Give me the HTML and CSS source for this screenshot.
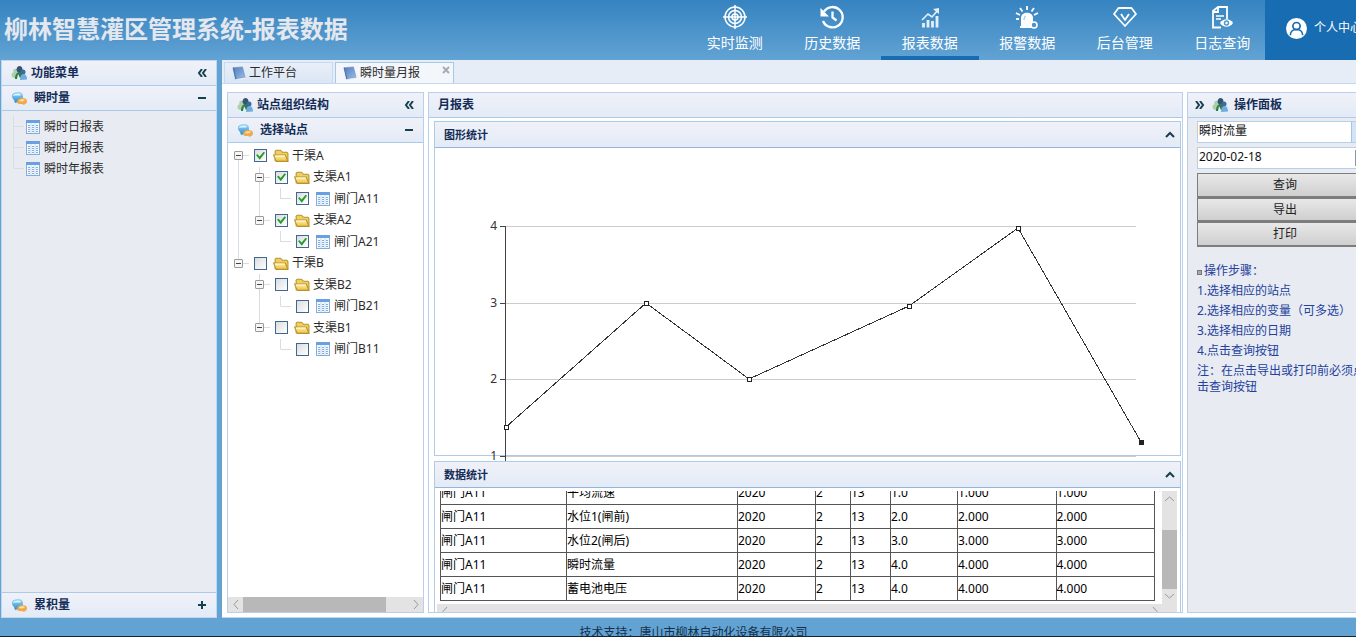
FILE: index.html
```html
<!DOCTYPE html>
<html lang="zh-CN">
<head>
<meta charset="utf-8">
<title>柳林智慧灌区管理系统-报表数据</title>
<link rel="stylesheet" href="styles.css">
</head>
<body>
<svg class="defs" aria-hidden="true">
  <defs>
    <linearGradient id="g-folder" x1="0" y1="0" x2="0" y2="1"><stop offset="0" stop-color="#fff3b0"/><stop offset="1" stop-color="#ecbd3d"/></linearGradient>
    <linearGradient id="g-book" x1="0" y1="0" x2="1" y2="1"><stop offset="0" stop-color="#4f7dbd"/><stop offset="1" stop-color="#9dbde8"/></linearGradient>
    <linearGradient id="g-blue" x1="0" y1="0" x2="0" y2="1"><stop offset="0" stop-color="#9ddcf8"/><stop offset="1" stop-color="#2c86cb"/></linearGradient>
  </defs>
  <symbol id="people" viewBox="0 0 16 16">
    <ellipse cx="4" cy="10" rx="3.500" ry="3" fill="#a9d3a4"/><circle cx="4.500" cy="6" r="2.300" fill="#b0c9b8"/>
    <path d="M5.500 5C5.500 0 11 0 11.500 4L11 7 7 8Z" fill="#31566f"/>
    <path d="M4 14c0-5 2-7 5-7s4 2 4 7Z" fill="#2f7a4b"/>
    <circle cx="12" cy="7" r="2.500" fill="#3c6ba0"/><path d="M9 15c0-4 1-6 3.500-6s3.500 3 3.500 5.500Z" fill="#6fabdf"/>
    <path d="M7 9l2.500 5H6Z" fill="#e3f4ea"/>
  </symbol>
  <symbol id="chat" viewBox="0 0 16 16">
    <path d="M1 6c0-3 3-4 6-4 4 0 5 2 5 5s-2 5-5 5l-3 1-1-3C2 9 1 8 1 6Z" fill="url(#g-blue)"/>
    <path d="M2 6c1-3 7-3 8-1C9 6 5 5 2 6Z" fill="#d9f3fd"/>
    <path d="M6 12c0-2 2-4 5-4s5 1 5 3-1 3-2 3l-1 1-2-1c-3 0-5 0-5-2Z" fill="#efa94b"/>
    <path d="M8 11c1-2 5-2 6-1-1 1-3 2-6 1Z" fill="#fae0af"/>
  </symbol>
  <symbol id="grid" viewBox="0 0 14 14">
    <rect x=".5" y=".5" width="13" height="13" fill="#f3f8fe" stroke="#86add9"/>
    <path d="M0 0h14v3H0Z" fill="#6a9fe0"/>
    <path d="M2 5.500h2M6 5.500h2M10 5.500h2M2 7.500h2M6 7.500h2M10 7.500h2M2 9.500h2M6 9.500h2M10 9.500h2M2 11.500h2M6 11.500h2M10 11.500h2" stroke="#82aee2"/>
    <path d="M5 3v10M9 3v10" stroke="#bdd2ec" stroke-width=".7"/>
  </symbol>
  <symbol id="folder" viewBox="0 1 15 12">
    <path d="M2 12V3l1-1h4l2 2h4l1 1v7Z" fill="#f0cf62" stroke="#b8922c"/>
    <path d="M.5 6.500h11l2.500 6H3Z" fill="url(#g-folder)" stroke="#b8922c"/>
    <path d="M2 7.500h9" stroke="#fffbe0"/>
  </symbol>
  <symbol id="book" viewBox="0 0 16 16">
    <path d="M1 2l11-1 3 12-11 2Z" fill="url(#g-book)" stroke="#6585b5" stroke-width=".6"/>
    <path d="M1 2l1 0 3 12.500-1 .5Z" fill="#4a72ab"/><path d="M4 15l11-2v1.500L5 16Z" fill="#e8eef6"/>
  </symbol>
</svg>

<header class="top">
  <h1 class="top-title">柳林智慧灌区管理系统-报表数据</h1>
  <nav class="top-nav">
    <a class="nav-item" href="#"><svg class="nav-icon" viewBox="0 0 24 24"><g fill="none" stroke="#fff" stroke-width="1.500"><circle cx="12" cy="12" r="10"/><circle cx="12" cy="12" r="6.500"/><circle cx="12" cy="12" r="3"/><path d="M12 0v24M0 12h24"/></g></svg><span>实时监测</span></a>
    <a class="nav-item" href="#"><svg class="nav-icon" viewBox="0 0 24 24"><g fill="none" stroke="#fff" stroke-width="2.300"><path d="M4 6.500a10.200 10.200 0 1 1-1 9.500"/><path d="M12.500 6.500v6l4 3"/></g><path d="M.5 3v8.500H9Z" fill="#fff"/></svg><span>历史数据</span></a>
    <a class="nav-item active" href="#"><svg class="nav-icon" viewBox="0 0 24 24"><g fill="none" stroke="#e3f0fb"><path d="M5.500 18v4.500M10 15v7.500M14.500 16v6.500M19 11v11.500" stroke-width="2.800"/><path d="M4 15l6-6 4 3 6-7" stroke-width="1.600"/></g><path d="M15 4l6-1v6Z" fill="#e3f0fb"/></svg><span>报表数据</span></a>
    <a class="nav-item" href="#"><svg class="nav-icon" viewBox="0 0 24 24"><path d="M6 21v-8c0-7 12-7 12 0v8Z" fill="#fff"/><path d="M5 22h12" stroke="#fff" stroke-width="2"/><path d="M12 1v4M5 3l2.500 3.500M19 3l-2.500 3.500M1 8l4 2M23 8l-4 2M1 14h3" stroke="#fff" stroke-width="1.800"/><circle cx="19" cy="20" r="3" fill="#4c94cc" stroke="#fff" stroke-width="1.600"/><path d="M9 15c0-3 1-4 2-4" stroke="#8cbce2" fill="none"/></svg><span>报警数据</span></a>
    <a class="nav-item" href="#"><svg class="nav-icon" viewBox="0 0 24 24"><g fill="none" stroke="#fff" stroke-width="1.800" stroke-linejoin="round"><path d="M5.500 3h13L23 9 12 21 1 9Z"/><path d="M8 9l4 6 4-6"/></g></svg><span>后台管理</span></a>
    <a class="nav-item" href="#"><svg class="nav-icon" viewBox="0 0 24 24"><g fill="none" stroke="#fff" stroke-width="1.800"><path d="M11 22.500H3V6l5-4h9v12"/><path d="M3 7h5V2"/><path d="M6 11h8M6 14h5" stroke-width="1.300"/></g><path d="M10 18c3-5 10-5 13 0-3 5-10 5-13 0Z" fill="#fff"/><circle cx="16.500" cy="18" r="2" fill="#fff" stroke="#5399cd" stroke-width="1.500"/></svg><span>日志查询</span></a>
  </nav>
  <a class="user" href="#"><svg class="user-icon" viewBox="0 0 22 22"><circle cx="11" cy="11" r="11" fill="#fff"/><g fill="none" stroke="#186cb1" stroke-width="1.800"><circle cx="11" cy="8.500" r="3.800"/><path d="M4.500 18c0-8 13-8 13 0"/></g></svg><span>个人中心</span></a>
</header>

<main class="main">
  <aside class="side">
    <div class="bar"><svg class="i16"><use href="#people"/></svg><h2 class="bar-title">功能菜单</h2><button class="tool" aria-label="收起"><svg viewBox="0 0 10 8"><path d="M5 0L2 4l3 4M9 0L6 4l3 4"/></svg></button></div>
    <div class="bar"><svg class="i16"><use href="#chat"/></svg><h3 class="bar-title sub">瞬时量</h3><button class="tool" aria-label="折叠"><svg viewBox="0 0 10 8"><path d="M1 4h8"/></svg></button></div>
    <ul class="menu">
      <li><i class="guide tee"></i><a href="#"><svg class="i14"><use href="#grid"/></svg>瞬时日报表</a></li>
      <li><i class="guide tee"></i><a href="#"><svg class="i14"><use href="#grid"/></svg>瞬时月报表</a></li>
      <li><i class="guide elbow"></i><a href="#"><svg class="i14"><use href="#grid"/></svg>瞬时年报表</a></li>
    </ul>
    <div class="bar bottom"><svg class="i16"><use href="#chat"/></svg><h3 class="bar-title sub">累积量</h3><button class="tool" aria-label="展开"><svg viewBox="0 0 10 8"><path d="M1 4h8M5 0v8"/></svg></button></div>
  </aside>

  <section class="work">
    <div class="tabs">
      <a class="tab" href="#"><svg class="i14"><use href="#book"/></svg>工作平台</a>
      <a class="tab current" href="#"><svg class="i14"><use href="#book"/></svg>瞬时量月报<svg class="close" viewBox="0 0 8 8"><path d="M1 1l6 6M7 1L1 7"/></svg></a>
    </div>
    <div class="panes">
      <section class="pane tree-pane">
        <div class="bar"><svg class="i16"><use href="#people"/></svg><h2 class="bar-title">站点组织结构</h2><button class="tool" aria-label="收起"><svg viewBox="0 0 10 8"><path d="M5 0L2 4l3 4M9 0L6 4l3 4"/></svg></button></div>
        <div class="bar"><svg class="i16"><use href="#chat"/></svg><h3 class="bar-title sub">选择站点</h3><button class="tool" aria-label="折叠"><svg viewBox="0 0 10 8"><path d="M1 4h8"/></svg></button></div>
        <ul class="tree">
          <li><i class="guide first"><b></b></i><label><input type="checkbox" checked><svg class="fold"><use href="#folder"/></svg>干渠A</label></li>
          <li><i class="guide line"></i><i class="guide tee"><b></b></i><label><input type="checkbox" checked><svg class="fold"><use href="#folder"/></svg>支渠A1</label></li>
          <li><i class="guide line"></i><i class="guide line"></i><i class="guide elbow"></i><label><input type="checkbox" checked><svg class="fold leaf"><use href="#grid"/></svg>闸门A11</label></li>
          <li><i class="guide line"></i><i class="guide elbow"><b></b></i><label><input type="checkbox" checked><svg class="fold"><use href="#folder"/></svg>支渠A2</label></li>
          <li><i class="guide line"></i><i class="guide"></i><i class="guide elbow"></i><label><input type="checkbox" checked><svg class="fold leaf"><use href="#grid"/></svg>闸门A21</label></li>
          <li><i class="guide elbow"><b></b></i><label><input type="checkbox"><svg class="fold"><use href="#folder"/></svg>干渠B</label></li>
          <li><i class="guide"></i><i class="guide tee"><b></b></i><label><input type="checkbox"><svg class="fold"><use href="#folder"/></svg>支渠B2</label></li>
          <li><i class="guide"></i><i class="guide line"></i><i class="guide elbow"></i><label><input type="checkbox"><svg class="fold leaf"><use href="#grid"/></svg>闸门B21</label></li>
          <li><i class="guide"></i><i class="guide elbow"><b></b></i><label><input type="checkbox"><svg class="fold"><use href="#folder"/></svg>支渠B1</label></li>
          <li><i class="guide"></i><i class="guide"></i><i class="guide elbow"></i><label><input type="checkbox"><svg class="fold leaf"><use href="#grid"/></svg>闸门B11</label></li>
        </ul>
        <div class="scroll-x"><svg class="arrow" viewBox="0 0 15 15"><path d="M10 3L6 7.500l4 4.500"/></svg><div class="thumb-x"></div><svg class="arrow" viewBox="0 0 15 15"><path d="M6 3l4 4.500L6 12"/></svg></div>
      </section>

      <section class="pane report">
        <div class="bar"><h2 class="bar-title plain">月报表</h2></div>
        <div class="report-body">
          <section class="box chart-box">
            <div class="bar box-bar"><h3 class="bar-title small">图形统计</h3><button class="tool" aria-label="折叠"><svg viewBox="0 0 10 8"><path d="M1 6l4-4 4 4"/></svg></button></div>
            <div class="chart">
              <svg class="plot" role="img" aria-label="图形统计">
                <path class="gridline" d="M71 78h630M71 155h630M71 231h630M71 308h630"/>
                <path class="axis" d="M70 78v262M65 78h6M65 155h6M65 231h6M65 308h6"/>
                <text x="62" y="82">4</text><text x="62" y="159">3</text><text x="62" y="235">2</text><text x="62" y="312">1</text>
                <path class="series" d="M71 279L211 155L314 231L474 158L583 80L706 294"/>
                <g class="points"><rect x="69" y="277" width="4" height="4"/><rect x="209" y="153" width="4" height="4"/><rect x="312" y="229" width="4" height="4"/><rect x="472" y="156" width="4" height="4"/><rect x="581" y="78" width="4" height="4"/><rect class="solid" x="704" y="292" width="4" height="4"/></g>
              </svg>
            </div>
          </section>
          <section class="box data-box">
            <div class="bar box-bar"><h3 class="bar-title small">数据统计</h3><button class="tool" aria-label="折叠"><svg viewBox="0 0 10 8"><path d="M1 6l4-4 4 4"/></svg></button></div>
            <div class="data-view">
              <div class="data-row">
                <div class="data-clip">
                  <table class="data">
                    <colgroup><col class="c1"><col class="c2"><col class="c3"><col class="c4"><col class="c5"><col class="c6"><col class="c7"><col class="c7"></colgroup>
                    <tbody>
                      <tr><td>闸门A11</td><td>平均流速</td><td>2020</td><td>2</td><td>13</td><td>1.0</td><td>1.000</td><td>1.000</td></tr>
                      <tr><td>闸门A11</td><td>水位1(闸前)</td><td>2020</td><td>2</td><td>13</td><td>2.0</td><td>2.000</td><td>2.000</td></tr>
                      <tr><td>闸门A11</td><td>水位2(闸后)</td><td>2020</td><td>2</td><td>13</td><td>3.0</td><td>3.000</td><td>3.000</td></tr>
                      <tr><td>闸门A11</td><td>瞬时流量</td><td>2020</td><td>2</td><td>13</td><td>4.0</td><td>4.000</td><td>4.000</td></tr>
                      <tr><td>闸门A11</td><td>蓄电池电压</td><td>2020</td><td>2</td><td>13</td><td>4.0</td><td>4.000</td><td>4.000</td></tr>
                    </tbody>
                  </table>
                </div>
                <div class="scroll-y"><svg class="arrow" viewBox="0 0 15 15"><path d="M3 10l4.500-4L12 10"/></svg><div class="thumb-y"></div><svg class="arrow" viewBox="0 0 15 15"><path d="M3 5l4.500 4L12 5"/></svg></div>
              </div>
              <div class="scroll-x short"><svg class="arrow" viewBox="0 0 15 15"><path d="M10 3L6 7.500l4 4.500"/></svg><svg class="arrow" viewBox="0 0 15 15"><path d="M6 3l4 4.500L6 12"/></svg></div>
            </div>
          </section>
        </div>
      </section>

      <aside class="pane ops">
        <div class="bar"><button class="tool" aria-label="收起"><svg viewBox="0 0 10 8"><path d="M1 0l3 4-3 4M5 0l3 4-3 4"/></svg></button><svg class="i16"><use href="#people"/></svg><h2 class="bar-title">操作面板</h2></div>
        <form class="form">
          <div class="field"><select aria-label="变量"><option>瞬时流量</option></select><span class="drop"></span></div>
          <div class="field"><input type="text" value="2020-02-18" aria-label="日期"><span class="cal"></span></div>
          <div class="actions"><button type="button">查询</button><button type="button">导出</button><button type="button">打印</button></div>
          <div class="steps">
            <p><i class="dot"></i>操作步骤：</p>
            <p>1.选择相应的站点</p>
            <p>2.选择相应的变量（可多选）</p>
            <p>3.选择相应的日期</p>
            <p>4.点击查询按钮</p>
            <p>注：在点击导出或打印前必须点击查询按钮</p>
          </div>
        </form>
      </aside>
    </div>
  </section>
</main>
<footer class="foot">技术支持：唐山市柳林自动化设备有限公司</footer>
</body>
</html>
```

FILE: styles.css
```css
* { box-sizing: border-box; }
body {
  margin: 0;
  height: 100vh;
  display: flex;
  flex-direction: column;
  overflow: hidden;
  background: #62a3d4;
  color: #2b2b2b;
  font: 12px/16px "Noto Sans", "Noto Sans CJK SC", sans-serif;
}
h1, h2, h3, p, ul { margin: 0; padding: 0; }
ul { list-style: none; }
a { color: inherit; text-decoration: none; }
svg { flex: none; }
.defs { position: absolute; width: 0; height: 0; }
.i16 { width: 16px; height: 16px; }
.i14 { width: 14px; height: 14px; }

/* Header */
.top {
  flex: 0 0 60px;
  display: flex;
  background: linear-gradient(#3583c0, #62a3d4);
  color: #fff;
}
.top-title {
  flex: 1;
  padding-left: 4px;
  font-size: 24px;
  line-height: 58px;
  color: #e4e8ee;
  white-space: nowrap;
}
.top-nav { width: 585px; display: grid; grid-template-columns: repeat(6, 1fr); }
.nav-item {
  display: flex;
  flex-direction: column;
  align-items: center;
  gap: 3px;
  padding-top: 5px;
  font-size: 14px;
  line-height: 22px;
}
.nav-item.active { border-bottom: 4px solid #186cb1; }
.nav-icon { width: 24px; height: 24px; }
.user {
  flex: 0 0 91px;
  display: flex;
  align-items: center;
  gap: 7px;
  margin-left: -6px;
  padding: 0 0 4px 21px;
  overflow: hidden;
  white-space: nowrap;
  background: #186cb1;
}
.user-icon { width: 21px; height: 21px; }

/* Page frame */
.main { flex: 1; min-height: 0; display: flex; gap: 5px; padding-left: 1px; }
.side {
  flex: 0 0 216px;
  display: flex;
  flex-direction: column;
  border: 1px solid #c0d8ee;
  background: #e8ecf2;
}
.bar {
  flex: 0 0 25px;
  display: flex;
  align-items: center;
  padding: 0 9px;
  border-bottom: 1px solid #abcbe9;
  background: linear-gradient(#f0f1f9, #e3ebf6);
}
.bar.bottom { border-top: 1px solid #abcbe9; border-bottom: 0; }
.bar-title { flex: 1; padding-left: 4px; font-size: 12px; line-height: 16px; color: #132c56; }
.bar-title.sub { padding-left: 7px; }
.bar-title.plain { padding-left: 0; }
.bar-title.small { padding-left: 0; font-size: 11px; }
.tool { display: flex; padding: 0; border: 0; background: none; }
.tool svg { width: 10px; height: 8px; fill: none; stroke: #17404f; stroke-width: 2; }

.menu, .tree { display: flex; flex-direction: column; }
.menu { flex: 1; padding: 5px 0 0 1px; }
.menu li { display: flex; height: 21px; align-items: stretch; }
.menu a { display: flex; align-items: center; gap: 4px; padding-left: 2px; }
.guide {
  flex: 0 0 21px;
  display: flex;
  align-items: center;
  justify-content: center;
  background-repeat: no-repeat;
}
.guide.line, .guide.tee, .guide.elbow, .guide.first { background-image: linear-gradient(#d9dce0, #d9dce0), linear-gradient(#d9dce0, #d9dce0); }
.guide.line { background-size: 1px 100%, 0 0; background-position: 10px 0, 0 0; }
.guide.tee { background-size: 1px 100%, 10px 1px; background-position: 10px 0, 11px 50%; }
.guide.elbow { background-size: 1px 50%, 10px 1px; background-position: 10px 0, 11px 50%; }
.guide.first { background-size: 1px 50%, 10px 1px; background-position: 10px 100%, 11px 50%; }
.guide b {
  width: 9px;
  height: 9px;
  border: 1px solid #9a9a9a;
  border-radius: 1px;
  background: linear-gradient(#444, #444) center / 5px 1px no-repeat #f6f6f6;
}

/* Work area */
.work { flex: 1; min-width: 0; display: flex; flex-direction: column; background: #fff; border-bottom: 1px solid #c0d8ee; }
.tabs {
  flex: 0 0 24px;
  display: flex;
  gap: 2px;
  padding: 2px 0 0 2px;
  border-bottom: 1px solid #c5d9ee;
  background: #e6edf7;
}
.tab {
  display: flex;
  align-items: center;
  gap: 3px;
  width: 109px;
  padding-left: 7px;
  border: 1px solid #c8daee;
  border-bottom: 0;
  background: linear-gradient(#e9eff9, #dae6f5);
}
.tab.current { width: 119px; border-color: #a9c8e6; background: #f3f6fb; }
.close { width: 8px; height: 8px; margin: 0 3px 6px auto; stroke: #a4acb5; stroke-width: 2; }
.panes { flex: 1; min-height: 0; display: flex; gap: 4px; padding: 8px 0 4px 5px; }
.pane { display: flex; flex-direction: column; min-width: 0; border: 1px solid #b9d0e8; overflow: hidden; }
.tree-pane { flex: 0 0 197px; }
.tree { height: 215px; margin: 2px 0 auto; }
.tree li { flex: 1; display: flex; }
.tree label { display: flex; align-items: center; }
.tree input {
  appearance: none;
  display: grid;
  place-items: center;
  width: 13px;
  height: 13px;
  margin: 0 5px;
  border: 1px solid #41668f;
  background: linear-gradient(135deg, #d9dcdf, #fff);
}
.tree input:checked::before {
  content: "";
  width: 9px;
  height: 8px;
  background: #279a27;
  clip-path: polygon(0 40%, 18% 30%, 40% 60%, 85% 0, 100% 12%, 42% 100%);
}
.fold { width: 16px; height: 13px; margin: 0 3px 0 1px; }
.fold.leaf { width: 14px; height: 14px; margin: 0 4px 0 2px; }

.scroll-x { flex: 0 0 15px; display: flex; background: #e3e3e3; }
.scroll-x.short { flex-basis: 8px; justify-content: space-between; padding-right: 15px; overflow: hidden; }
.arrow { width: 15px; height: 15px; fill: none; stroke: #999; }
.thumb-x { flex: 0 0 143px; margin-right: auto; background: #b8b8b8; }
.scroll-y { flex: 0 0 15px; display: flex; flex-direction: column; background: #e3e3e3; }
.thumb-y { flex: 0 0 59px; margin-top: auto; background: #b8b8b8; }

.report { flex: 1; }
.report-body { flex: 1; min-height: 0; display: flex; flex-direction: column; gap: 5px; padding: 3px 1px 0 5px; }
.box { display: flex; flex-direction: column; min-height: 0; border: 1px solid #b0cbe6; }
.box-bar { flex-basis: 26px; padding-right: 5px; border-color: #93b6dc; position: relative; z-index: 1; }
.chart-box { flex: 1; }
.data-box { flex: 0 0 151px; border-bottom: 0; }
.chart { flex: 1; min-height: 0; }
.plot { display: block; width: 100%; height: 100%; overflow: visible; fill: none; shape-rendering: crispEdges; }
.plot text { fill: #333; font-size: 12px; text-anchor: end; }
.gridline { stroke: #ccc; }
.axis { stroke: #444; }
.series { stroke: #333; }
.points { stroke: #222; fill: #fff; }
.points .solid { fill: #222; }

.data-view { flex: 1; min-height: 0; display: flex; flex-direction: column; margin: 3px 3px 0 2px; position: relative; background: #fff; }
.data-row { flex: 1; min-height: 0; display: flex; }
.data-clip { flex: 1; min-width: 0; display: flex; align-items: flex-end; padding: 0 7px 3px 3px; overflow: hidden; }
.data { width: 100%; table-layout: fixed; border-collapse: collapse; color: #000; }
.data td { height: 24px; padding: 0; border: 1px solid #555; white-space: nowrap; }
.c1 { width: 126px; }
.c2 { width: 171px; }
.c3 { width: 78px; }
.c4 { width: 35px; }
.c5 { width: 40px; }
.c6 { width: 67px; }

/* Operation panel */
.ops { flex: 0 0 169px; border-right: 0; background: #e8ecf2; }
.ops .i16 { margin: 0 2px 0 7px; }
.ops .bar { padding-left: 7px; }
.form { width: 176px; margin: 3px 0 0 9px; }
.field { display: flex; height: 22px; margin-bottom: 4px; border: 1px solid #b9cfe6; background: #fff; }
.field select, .field input {
  appearance: none;
  flex: 1;
  min-width: 0;
  padding: 0 1px 3px;
  border: 0;
  background: none;
  color: #111;
  font: inherit;
}
.drop { width: 21px; border-left: 1px solid #a9c4e2; background: #d4e3f5; }
.cal { width: 17px; margin: 2px 0; border-left: 1px solid #8a97a8; background: #e3e8ef; }
.actions { display: flex; flex-direction: column; height: 74px; }
.actions button {
  flex: 1;
  padding: 0;
  border: 1px solid #7d7d7d;
  border-bottom-width: 2px;
  background: linear-gradient(#e8e8e8, #cfcfcf);
  color: #222;
  font: inherit;
}
.steps { margin-top: 16px; color: #24409c; }
.steps p { margin-bottom: 4px; }
.dot { display: inline-block; width: 5px; height: 5px; margin-right: 2px; border: 1px solid #777; background: #aaa; }

.foot {
  flex: 0 0 19px;
  padding: 7px 0 0 31px;
  overflow: hidden;
  border-bottom: 1px solid #16242e;
  color: #16304a;
  text-align: center;
}
```
